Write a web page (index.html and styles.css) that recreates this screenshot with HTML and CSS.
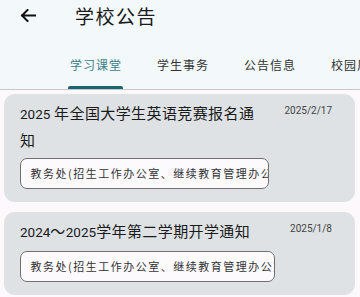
FILE: index.html
```html
<!DOCTYPE html>
<html lang="zh">
<head>
<meta charset="utf-8">
<title>学校公告</title>
<link rel="stylesheet" href="styles.css">
</head>
<body>
<header class="header">
  <div class="topbar">
    <svg class="back" width="16" height="13" viewBox="0 0 16 13" aria-hidden="true">
      <path d="M15.5 6.5H2M7.5 1L2 6.5L7.5 12" fill="none" stroke="#111" stroke-width="2" stroke-linecap="square"/>
    </svg>
    <h1 class="title">学校公告</h1>
  </div>
  <nav class="tabs">
    <div class="tab active"><span class="label">学习课堂</span><div class="indicator"></div></div>
    <div class="tab"><span class="label">学生事务</span></div>
    <div class="tab"><span class="label">公告信息</span></div>
    <div class="tab"><span class="label">校园风采</span></div>
  </nav>
</header>
<main class="list">
  <article class="card">
    <div class="content">
      <h2 class="card-title"><span class="num">2025</span> 年全国大学生英语竞赛报名通知</h2>
      <div class="source">教务处(招生工作办公室、继续教育管理办公室)</div>
    </div>
    <div class="date">2025/2/17</div>
  </article>
  <article class="card">
    <div class="content">
      <h2 class="card-title"><span class="num">2024</span>～<span class="num">2025</span>学年第二学期开学通知</h2>
      <div class="source">教务处(招生工作办公室、继续教育管理办公室)</div>
    </div>
    <div class="date">2025/1/8</div>
  </article>
</main>
</body>
</html>
```

FILE: styles.css
```css
* { box-sizing: border-box; }
html, body { margin: 0; padding: 0; }
body {
  width: 360px;
  height: 297px;
  overflow: hidden;
  background: #fcf8fc;
  font-family: "Noto Sans CJK SC", "Noto Sans", sans-serif;
  color: #1a1a1a;
}
.header {
  background: #f3f9fb;
  border-bottom: 1px solid #c6c8ca;
}
.topbar {
  height: 30px;
  display: flex;
  align-items: center;
  padding-left: 20px;
  padding-top: 1px;
}
.back { display: block; flex: none; }
.title {
  margin: 0 0 0 39px;
  font-size: 19px;
  font-weight: 400;
  letter-spacing: 1.5px;
  line-height: 30px;
  color: #1a1a1a;
}
.tabs {
  display: flex;
  padding-left: 52px;
  overflow: hidden;
  white-space: nowrap;
}
.tab {
  flex: none;
  width: 87px;
  padding-top: 25px;
  text-align: center;
  height: 59px;
}
.label {
  display: block;
  font-size: 12px;
  line-height: 20px;
  letter-spacing: 1px;
  color: #333;
  padding-left: 1px;
}
.tab.active .label { color: #3b7f88; }
.indicator {
  width: 55px;
  height: 3px;
  margin: 11px auto 0;
  background: #1f6272;
  border-radius: 2px 2px 0 0;
}
.list {
  padding: 4px 5px 0 4px;
  display: flex;
  flex-direction: column;
  gap: 10px;
}
.card {
  background: #dee2e5;
  border-radius: 11px;
  display: flex;
  align-items: flex-start;
  gap: 15px;
  padding: 6px 23px 13px 16px;
}
.content {
  flex: 1;
  min-width: 0;
}
.card-title {
  margin: 0;
  font-size: 15px;
  font-weight: 400;
  line-height: 25px;
  letter-spacing: 0.4px;
  color: #1a1a1a;
}
.num {
  font-family: Roboto, "Noto Sans", sans-serif;
  font-size: 13.5px;
  letter-spacing: 0;
}
.source {
  margin-top: 6px;
  height: 31px;
  border: 1.5px solid #707072;
  border-radius: 7px;
  background: #fdfafd;
  padding-left: 9.5px;
  font-size: 11px;
  line-height: 28px;
  letter-spacing: 1.5px;
  color: #333;
  white-space: nowrap;
  overflow: hidden;
}
.date {
  flex: none;
  margin-top: 6px;
  font-family: Roboto, "Noto Sans", sans-serif;
  font-size: 10px;
  line-height: 10px;
  color: #444;
}
```
